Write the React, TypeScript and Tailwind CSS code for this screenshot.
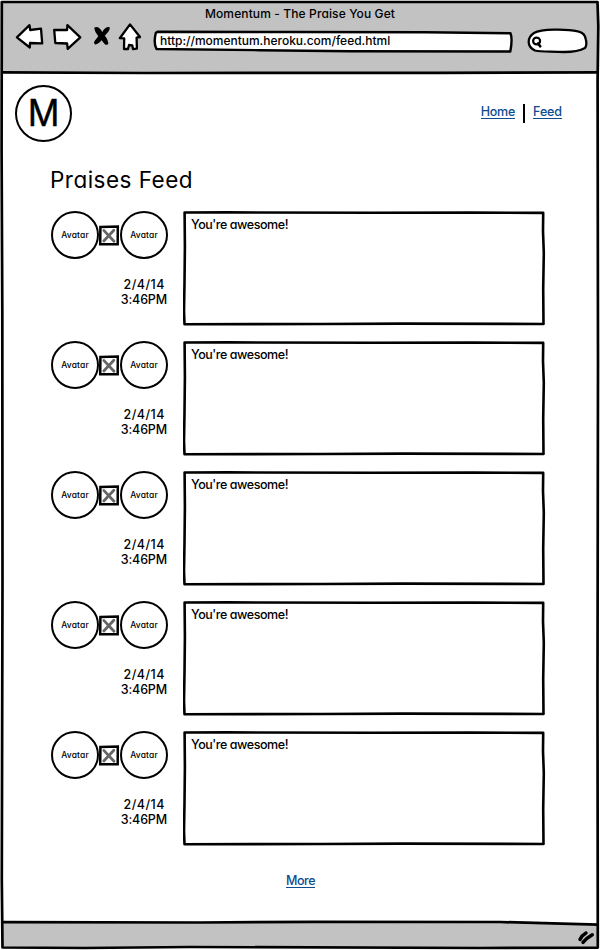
import React from "react";

const posts = [1, 2, 3, 4, 5].map((id) => ({
  id,
  date: "2/4/14",
  time: "3:46PM",
  message: "You're awesome!",
}));

function Avatar() {
  return (
    <div className="flex h-12 w-12 shrink-0 items-center justify-center rounded-full border-2 border-black bg-white text-[8.5px] font-medium leading-none tracking-[0.15px]">
      Avatar
    </div>
  );
}

function CrossBox() {
  return (
    <svg className="mt-[14px] h-5 w-[21px] shrink-0 overflow-visible" viewBox="0 0 21 20" fill="none">
      <path d="M1.4 2L18.8 1.5L18.7 19.2L1.2 19.2Z" fill="white" stroke="black" strokeWidth="2.5" />
      <path d="M4.8 5.4L15 16.2M14.8 5.2L4.8 16" stroke="#666" strokeWidth="2.8" strokeLinecap="round" />
    </svg>
  );
}

function Post({ date, time, message }: { date: string; time: string; message: string }) {
  return (
    <div className="flex h-[130px]">
      <div className="w-[117px] shrink-0">
        <div className="flex">
          <Avatar />
          <CrossBox />
          <Avatar />
        </div>
        <div className="mt-[18px] text-right text-[12.5px] font-medium leading-[15px]">
          <div className="pr-[3px] tracking-[0.5px]">{date}</div>
          <div className="pr-px tracking-[-0.15px]">{time}</div>
        </div>
      </div>
      <div className="relative ml-[15px] h-[115px] w-[363px] pl-[8px] pt-[6px] text-[12.5px] font-medium leading-[16px] tracking-[-0.44px]">
        <svg className="absolute inset-0 h-full w-full" viewBox="0 0 363 115" fill="none">
          <path
            d="M1.6 1.5L45 1.4L190 1.8L290 1.6L360.2 1.9L360 20L360.8 42L360.2 78L360.5 113L220 112.6L140 113L1.5 113.2L1 100L1.5 72L1.9 36Z"
            stroke="black"
            strokeWidth="2.6"
            strokeLinejoin="round"
          />
        </svg>
        {message}
      </div>
    </div>
  );
}

function NavIcons() {
  return (
    <svg className="h-[30px] w-[130px] shrink-0" viewBox="14 22 130 30" fill="white" stroke="black" strokeWidth="2.3" strokeLinejoin="round" strokeLinecap="round">
      <path d="M16.9 37.3L29.5 25.2L30.2 30L41 28.7L42.2 43.4L30 43L29.8 47.5Z" />
      <path d="M54.2 29.9L67.1 30L67.4 25.2L80.3 37.3L67.7 48.9L67.1 43.5L55.3 43Z" />
      <path d="M130 24.4L140 37L136.6 37.7L136.9 48.6L133 49L132.3 45.5L129 45L128 49L124 49L124.2 38.3L119.8 38.2Z" />
      <path
        d="M94.2 28.1Q95.5 26 98.5 27.5Q101 29 102.3 32Q105.5 26.3 109.3 27.1Q110.5 28.5 108.5 31.5L104.8 35.8Q108 39 108.3 44Q107 45.4 105.1 44.4L101.5 40.3Q98.2 44.7 95 44.4Q93.4 43.3 94.4 41.2L98.3 36.2Q94.8 32.5 94.2 28.1Z"
        stroke="none"
        fill="black"
      />
    </svg>
  );
}

function AddressBar() {
  return (
    <div className="relative ml-[9px] mt-[7px] h-[24px] w-[361px] shrink-0 pl-[7px] pt-[4px] text-[12px] font-medium leading-[16px]">
      <svg className="absolute inset-0 h-full w-full" viewBox="153 29 361 24" fill="white" stroke="black" strokeWidth="2.4" strokeLinejoin="round">
        <path d="M157.2 31.8L290 32L425 32.2L510.5 33.3Q512.7 39 510.3 51.5L350 51.2L260 50.2L156.5 49Q153.3 43 155.8 33Z" />
      </svg>
      <span className="relative tracking-[-0.01px]">http://momentum.heroku.com/feed.html</span>
    </div>
  );
}

function SearchBox() {
  return (
    <svg className="ml-[12px] mt-[5px] h-[28px] w-[64px] shrink-0" viewBox="526 27 64 28" fill="white" stroke="black" strokeWidth="2.3" strokeLinejoin="round" strokeLinecap="round">
      <path d="M534 33C541 29 566 28.8 578 31.4Q585 32.7 586 40Q587 45.5 585 48Q578 52 564 52C550 51.3 541 52 535 50.5C526.5 46.5 527 37.5 534 33Z" />
      <ellipse cx="536.6" cy="41" rx="3.5" ry="3.3" strokeWidth="2.2" />
      <path d="M538 43.5L540.3 46.3" strokeWidth="2.6" />
    </svg>
  );
}

export default function App() {
  return (
    <div className="relative flex h-[950px] w-[600px] flex-col overflow-hidden bg-white font-['Inter','Open_Sans',sans-serif] text-black [font-feature-settings:'cv11']">
      <svg className="pointer-events-none absolute inset-0 h-full w-full" viewBox="0 0 600 950" fill="none">
        <path d="M2 2H597V72.5H3Z" fill="#c2c2c2" />
        <path d="M3 922.2L200 922.5L315 921.8L500 922L597 925V947.5H3Z" fill="#c2c2c2" />
        <path d="M1.8 2L597.5 2L598.3 26L597.6 80L598 360L597.5 690L597.8 947.6L480 948L190 947L85 948L2.5 947.5L1.8 880L2.5 580L2.3 310L1.6 150Z" stroke="black" strokeWidth="2.7" strokeLinejoin="round" />
        <path d="M2 72.3L145 73L300 72.8L440 72.8L598 72.3" stroke="black" strokeWidth="2.7" />
        <path d="M3 922.2L200 922.5L315 921.8L500 922L598 924.7" stroke="black" strokeWidth="2.7" />
        <path d="M580 939.5Q582 935.2 586 933M583 942.3Q586 938.5 592.3 934.8" stroke="black" strokeWidth="3.5" strokeLinecap="round" />
      </svg>

      <header className="relative h-[73px] shrink-0">
        <div className="pt-[6px] text-center text-[12px] font-medium leading-[16px] tracking-[0.12px]">
          Momentum - The Praise You Get
        </div>
        <div className="flex items-start pl-[14px]">
          <NavIcons />
          <AddressBar />
          <SearchBox />
        </div>
      </header>

      <main className="relative grow">
        <div className="flex h-[82px] justify-between pl-[15px] pr-[38px] pt-[12px]">
          <div className="flex h-[57px] w-[57px] items-center justify-center rounded-full border-2 border-black">
            <span className="-mt-[3px] scale-x-[0.95] text-[37px] leading-none [-webkit-text-stroke:0.4px_black]">M</span>
          </div>
          <nav className="flex h-[20px] items-start pt-[19px] text-[12.5px] font-medium leading-[15px] text-[#0e4b8e]">
            <a className="h-[15px] border-b border-[#0e4b8e] tracking-[-0.25px]">Home</a>
            <span className="ml-[8px] mr-[8px] h-[19px] w-[2px] bg-black" />
            <a className="h-[15px] border-b border-[#0e4b8e] tracking-[-0.1px]">Feed</a>
          </nav>
        </div>
        <h1 className="h-[56px] pl-[50px] pt-[12px] text-[22.5px] leading-[26px] tracking-[0.48px]">Praises Feed</h1>
        <div className="pl-[51px]">
          {posts.map((p) => (
            <Post key={p.id} date={p.date} time={p.time} message={p.message} />
          ))}
        </div>
        <div className="flex justify-center pt-[12px] pl-px text-[12.5px] font-medium leading-[15px] text-[#0e4b8e]">
          <a className="h-[15px] border-b border-[#0e4b8e] tracking-[-0.45px]">More</a>
        </div>
      </main>
    </div>
  );
}
